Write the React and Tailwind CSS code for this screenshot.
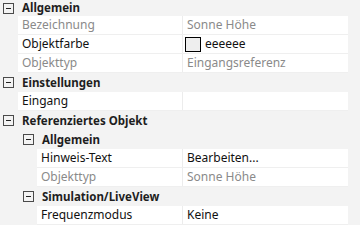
import React from 'react';

const font = { fontFamily: '"Segoe UI", "Noto Sans", sans-serif' };

const Box = () => (
  <svg width="11" height="11" viewBox="0 0 11 11" className="shrink-0">
    <rect x="0.5" y="0.5" width="10" height="10" fill="none" stroke="#4a4a4a" />
    <path d="M3 5.5h5" stroke="#222" />
  </svg>
);

const Category = ({ label, level = 0, first = false }) => (
  <div className={`flex items-center ${first ? 'h-[16px]' : 'h-[19px]'} ${level === 0 ? 'pl-[3px]' : 'pl-[23px]'}`}>
    <Box />
    <span className="ml-[8px] font-bold text-[11.5px] text-[#1e1e1e]">{label}</span>
  </div>
);

const Prop = ({ label, value, level = 0, muted = false, swatch = false }) => (
  <div className={`flex h-[19px] ${level === 0 ? 'pl-[18px]' : 'pl-[37px]'}`}>
    <div className="flex flex-1 border-b border-[#efefef]">
      <div className={`flex-1 bg-white flex items-center pl-[4px] text-[12px] ${muted ? 'text-[#8a8a8a]' : 'text-[#111]'}`}>
        {label}
      </div>
      <div className="w-px bg-[#ececec]" />
      <div className={`w-[165px] bg-white flex items-center pl-[4px] text-[12px] ${muted ? 'text-[#8a8a8a]' : 'text-[#111]'}`}>
        {swatch && <span className="w-[16px] h-[15px] border border-black bg-[#eeeeee] mr-[4px] -ml-[2px]" />}
        {value}
      </div>
    </div>
  </div>
);

export default function App() {
  return (
    <div className="w-[360px] h-[242px] bg-white overflow-hidden" style={font}>
      <div className="bg-[#f3f3f3] pr-[12px]">
        <Category label="Allgemein" first />
        <Prop label="Bezeichnung" value="Sonne Höhe" muted />
        <Prop label="Objektfarbe" value="eeeeee" swatch />
        <Prop label="Objekttyp" value="Eingangsreferenz" muted />
        <Category label="Einstellungen" />
        <Prop label="Eingang" value="" />
        <Category label="Referenziertes Objekt" />
        <Category label="Allgemein" level={1} />
        <Prop label="Hinweis-Text" value="Bearbeiten..." level={1} />
        <Prop label="Objekttyp" value="Sonne Höhe" level={1} muted />
        <Category label="Simulation/LiveView" level={1} />
        <Prop label="Frequenzmodus" value="Keine" level={1} />
      </div>
    </div>
  );
}
